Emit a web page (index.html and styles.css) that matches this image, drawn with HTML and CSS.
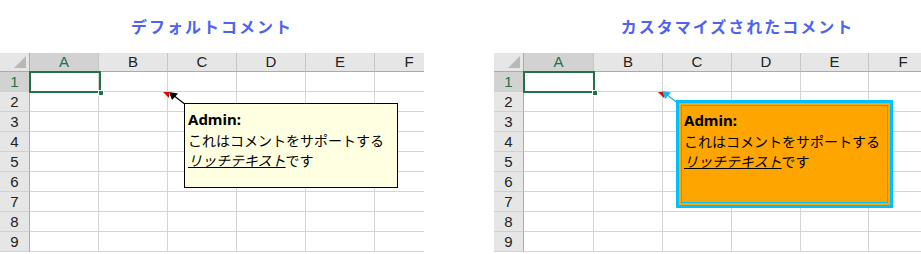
FILE: index.html
```html
<!DOCTYPE html>
<html lang="ja">
<head>
  <meta charset="UTF-8">
  <title>コメント</title>
  <link rel="stylesheet" href="styles.css">
</head>
<body>

  <div class="panel panel-left">
    <h2 class="title">デフォルトコメント</h2>
    <div class="sheet">
      <div class="grid">
        <div class="corner"><span class="tri"></span></div>
        <div class="ch sel">A</div><div class="ch">B</div><div class="ch">C</div><div class="ch">D</div><div class="ch">E</div><div class="ch">F</div>
        <div class="rh sel">1</div><div class="c"></div><div class="c"></div><div class="c"></div><div class="c"></div><div class="c"></div><div class="c"></div>
        <div class="rh">2</div><div class="c"></div><div class="c"></div><div class="c"></div><div class="c"></div><div class="c"></div><div class="c"></div>
        <div class="rh">3</div><div class="c"></div><div class="c"></div><div class="c"></div><div class="c"></div><div class="c"></div><div class="c"></div>
        <div class="rh">4</div><div class="c"></div><div class="c"></div><div class="c"></div><div class="c"></div><div class="c"></div><div class="c"></div>
        <div class="rh">5</div><div class="c"></div><div class="c"></div><div class="c"></div><div class="c"></div><div class="c"></div><div class="c"></div>
        <div class="rh">6</div><div class="c"></div><div class="c"></div><div class="c"></div><div class="c"></div><div class="c"></div><div class="c"></div>
        <div class="rh">7</div><div class="c"></div><div class="c"></div><div class="c"></div><div class="c"></div><div class="c"></div><div class="c"></div>
        <div class="rh">8</div><div class="c"></div><div class="c"></div><div class="c"></div><div class="c"></div><div class="c"></div><div class="c"></div>
        <div class="rh">9</div><div class="c"></div><div class="c"></div><div class="c"></div><div class="c"></div><div class="c"></div><div class="c"></div>
      </div>

      <div class="cursor"><span class="handle"></span></div>
      <span class="marker"></span>
      <svg class="arrow" width="30" height="20" viewBox="0 0 30 20">
        <line x1="19" y1="15" x2="6" y2="5" stroke="#000" stroke-width="1.2"/>
        <polygon points="2,2 11,3.5 5,10" fill="#000"/>
      </svg>

      <div class="comment default">
        <b class="author">Admin:</b>
        <p>これはコメントをサポートする</p>
        <p><i><u>リッチテキスト</u></i>です</p>
      </div>
    </div>
  </div>

  <div class="panel panel-right">
    <h2 class="title">カスタマイズされたコメント</h2>
    <div class="sheet">
      <div class="grid">
        <div class="corner"><span class="tri"></span></div>
        <div class="ch sel">A</div><div class="ch">B</div><div class="ch">C</div><div class="ch">D</div><div class="ch">E</div><div class="ch">F</div>
        <div class="rh sel">1</div><div class="c"></div><div class="c"></div><div class="c"></div><div class="c"></div><div class="c"></div><div class="c"></div>
        <div class="rh">2</div><div class="c"></div><div class="c"></div><div class="c"></div><div class="c"></div><div class="c"></div><div class="c"></div>
        <div class="rh">3</div><div class="c"></div><div class="c"></div><div class="c"></div><div class="c"></div><div class="c"></div><div class="c"></div>
        <div class="rh">4</div><div class="c"></div><div class="c"></div><div class="c"></div><div class="c"></div><div class="c"></div><div class="c"></div>
        <div class="rh">5</div><div class="c"></div><div class="c"></div><div class="c"></div><div class="c"></div><div class="c"></div><div class="c"></div>
        <div class="rh">6</div><div class="c"></div><div class="c"></div><div class="c"></div><div class="c"></div><div class="c"></div><div class="c"></div>
        <div class="rh">7</div><div class="c"></div><div class="c"></div><div class="c"></div><div class="c"></div><div class="c"></div><div class="c"></div>
        <div class="rh">8</div><div class="c"></div><div class="c"></div><div class="c"></div><div class="c"></div><div class="c"></div><div class="c"></div>
        <div class="rh">9</div><div class="c"></div><div class="c"></div><div class="c"></div><div class="c"></div><div class="c"></div><div class="c"></div>
      </div>

      <div class="cursor"><span class="handle"></span></div>
      <span class="marker"></span>
      <svg class="arrow" width="30" height="20" viewBox="0 0 30 20">
        <line x1="19" y1="15" x2="6" y2="5" stroke="#1ab4e8" stroke-width="1.2"/>
        <polygon points="2,2 11,3.5 5,10" fill="#1ab4e8"/>
      </svg>

      <div class="comment custom">
        <b class="author">Admin:</b>
        <p>これはコメントをサポートする</p>
        <p><i><u>リッチテキスト</u></i>です</p>
      </div>
    </div>
  </div>

</body>
</html>
```

FILE: styles.css
```css
* {
  box-sizing: border-box;
  margin: 0;
  padding: 0;
}

body {
  background: #fff;
  height: 254px;
  overflow: hidden;
  display: flex;
  font-family: "Liberation Sans", sans-serif;
}

.panel {
  flex: none;
  overflow: hidden;
  height: 254px;
}

.panel-left {
  width: 424px;
}

.panel-right {
  width: 487px;
  margin-left: 70px;
}

.title {
  height: 53px;
  line-height: 53px;
  text-align: center;
  font-family: "Noto Sans CJK JP", sans-serif;
  font-size: 16px;
  font-weight: bold;
  letter-spacing: 2px;
  color: #4f63f0;
  white-space: nowrap;
}

.sheet {
  position: relative;
}

.grid {
  display: grid;
  width: 444px;
  grid-template-columns: 30px 69px 69px 69px 69px 69px 69px;
  grid-template-rows: 19px;
  grid-auto-rows: 20px;
}

.panel-right .grid {
  grid-template-columns: 30px 70px 69px 69px 69px 68px 69px;
}

.corner, .ch, .rh {
  background: #e6e6e6;
  color: #222;
  font-size: 15px;
  text-align: center;
}

.corner {
  position: relative;
  border-right: 1px solid #ababab;
  border-bottom: 1px solid #ababab;
}

.corner .tri {
  position: absolute;
  right: 3px;
  bottom: 3px;
  width: 0;
  height: 0;
  border-left: 12px solid transparent;
  border-bottom: 12px solid #b8b8b8;
}

.ch {
  line-height: 18px;
  border-right: 1px solid #c6c6c6;
  border-bottom: 1px solid #ababab;
}

.rh {
  line-height: 19px;
  border-right: 1px solid #ababab;
  border-bottom: 1px solid #d0d0d0;
}

.ch.sel, .rh.sel {
  background: #d2d2d2;
  color: #217346;
}

.c {
  border-right: 1px solid #d4d4d4;
  border-bottom: 1px solid #d4d4d4;
}

.cursor {
  position: absolute;
  left: 29px;
  top: 18px;
  width: 72px;
  height: 22px;
  border: 2px solid #217346;
}

.cursor .handle {
  position: absolute;
  right: -5px;
  bottom: -5px;
  width: 6px;
  height: 6px;
  background: #217346;
  border: 1px solid #fff;
}

.marker {
  position: absolute;
  left: 163px;
  top: 39px;
  width: 0;
  height: 0;
  border-left: 6px solid transparent;
  border-top: 6px solid #e00000;
}

.panel-right .marker {
  left: 164px;
}

.arrow {
  position: absolute;
  left: 167px;
  top: 37px;
}

.panel-right .arrow {
  left: 166px;
  top: 36px;
}

.comment {
  position: absolute;
  font-family: "Noto Sans CJK JP", sans-serif;
  font-size: 14px;
  line-height: 20px;
  color: #000;
}

.comment .author {
  display: block;
  font-family: "Noto Sans", sans-serif;
  font-weight: bold;
  font-size: 15px;
  line-height: 22px;
}

.comment.default {
  left: 184px;
  top: 50px;
  width: 214px;
  height: 85px;
  padding: 4px 3px;
  background: #ffffe1;
  border: 1px solid #000;
}

.comment.custom {
  left: 182px;
  top: 47px;
  width: 217px;
  height: 108px;
  padding: 6px 5px;
  background: #ffa500;
  border: 3px solid #00bfff;
  box-shadow: inset 0 0 0 2px #ffa500, inset 0 0 0 3px #00bfff;
}
```
